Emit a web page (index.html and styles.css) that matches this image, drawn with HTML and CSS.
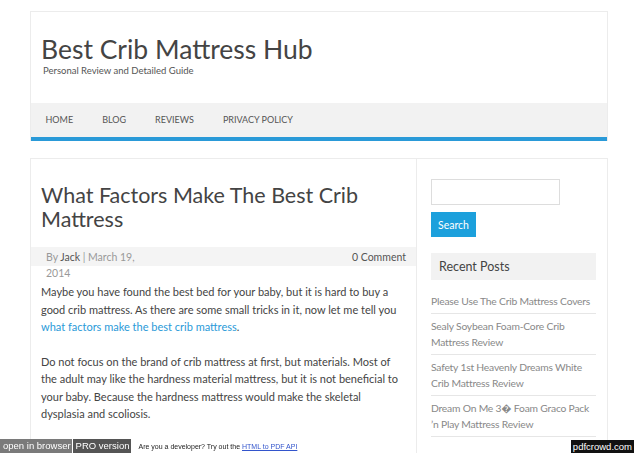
FILE: index.html
```html
<!DOCTYPE html>
<html lang="en">
<head>
    <meta charset="UTF-8">
    <meta name="viewport" content="width=device-width, initial-scale=1.0">
    <title>What Factors Make The Best Crib Mattress | Best Crib Mattress Hub</title>
    <link rel="stylesheet" href="styles.css">
</head>
<body>

    <div class="page">
        <header class="site-header">
            <div class="branding">
                <h1 class="site-title">Best Crib Mattress Hub</h1>
                <p class="site-desc">Personal Review and Detailed Guide</p>
            </div>
            <nav class="main-nav">
                <ul>
                    <li><a href="#">Home</a></li>
                    <li><a href="#">Blog</a></li>
                    <li><a href="#">Reviews</a></li>
                    <li><a href="#">Privacy Policy</a></li>
                </ul>
            </nav>
        </header>

        <div class="main">
            <article class="content">
                <h2 class="post-title">What Factors Make The Best Crib Mattress</h2>
                <div class="post-meta">
                    <div class="meta-left">
                        <span class="meta-line">By <a href="#">Jack</a> | March 19,</span>
                        <span class="meta-line">2014</span>
                    </div>
                    <a class="meta-comments" href="#">0 Comment</a>
                </div>
                <div class="post-body">
                    <p>Maybe you have found the best bed for your baby, but it is hard to buy a good crib mattress. As there are some small tricks in it, now let me tell you <a href="#">what factors make the best crib mattress</a>.</p>
                    <p>Do not focus on the brand of crib mattress at first, but materials. Most of the adult may like the hardness material mattress, but it is not beneficial to your baby. Because the hardness mattress would make the skeletal dysplasia and scoliosis.</p>
                </div>
            </article>

            <aside class="sidebar">
                <form class="search-form">
                    <input type="text" class="search-input">
                    <button type="submit" class="search-btn">Search</button>
                </form>
                <h3 class="widget-title">Recent Posts</h3>
                <ul class="recent-list">
                    <li><a href="#">Please Use The Crib Mattress Covers</a></li>
                    <li><a href="#">Sealy Soybean Foam-Core Crib Mattress Review</a></li>
                    <li><a href="#">Safety 1st Heavenly Dreams White Crib Mattress Review</a></li>
                    <li><a href="#">Dream On Me 3&#xFFFD; Foam Graco Pack &#8217;n Play Mattress Review</a></li>
                </ul>
            </aside>
        </div>
    </div>

    <div class="pdf-bar">
        <span class="pdf-open">open in browser</span><span class="pdf-pro">PRO version</span>
        <span class="pdf-note">Are you a developer? Try out the <a href="#">HTML to PDF API</a></span>
    </div>
    <div class="pdf-logo">pdfcrowd.com</div>

</body>
</html>
```

FILE: styles.css
```css
body {
    font-family: Lato, "Open Sans", sans-serif;
    background-color: #fff;
    color: #444;
    margin: 0;
    padding: 0;
}

a {
    text-decoration: none;
}

.page {
    width: 578px;
    margin-left: 30px;
    padding-top: 11px;
}

.site-header {
    border: 1px solid #ececec;
    border-bottom: none;
}

.branding {
    padding: 22px 0 26px 10px;
}

.site-title {
    font-size: 26.5px;
    font-weight: 400;
    line-height: 30px;
    color: #444;
    margin: 0;
}

.site-desc {
    font-size: 9.5px;
    line-height: 12px;
    color: #555;
    margin: 1px 0 0 2px;
}

.main-nav {
    background-color: #f2f2f2;
    border-bottom: 4px solid #2a9ad8;
}

.main-nav ul {
    list-style-type: none;
    margin: 0;
    padding: 0;
    display: flex;
}

.main-nav a {
    display: block;
    padding: 0 14.5px;
    line-height: 34px;
    font-size: 9px;
    text-transform: uppercase;
    color: #555;
}

.main {
    display: flex;
    margin-top: 17px;
    border: 1px solid #ececec;
    border-bottom: none;
    min-height: 300px;
}

.content {
    width: 385px;
    padding-top: 24px;
}

.post-title {
    font-size: 21.5px;
    font-weight: 400;
    line-height: 24px;
    color: #444;
    margin: 0 10px 16px;
}

.post-meta {
    background-color: #f4f4f4;
    height: 19px;
    margin-bottom: 17px;
    padding: 2px 10px 0 15px;
    box-sizing: border-box;
    display: flex;
    justify-content: space-between;
    font-size: 10.5px;
    line-height: 16px;
    color: #999;
}

.meta-left {
    display: flex;
    flex-direction: column;
}

.meta-left a {
    color: #555;
}

.meta-comments {
    color: #555;
}

.post-body {
    padding: 0 10px;
    font-size: 11px;
    line-height: 17.5px;
    color: #444;
}

.post-body p {
    margin: 0 0 17px;
}

.post-body a {
    color: #2a9ad8;
}

.sidebar {
    flex: 1;
    border-left: 1px solid #ececec;
    padding: 20px 11px 0 14px;
}

.search-form {
    display: flex;
    flex-direction: column;
    align-items: flex-start;
    gap: 7px;
}

.search-input {
    width: 129px;
    height: 26px;
    box-sizing: border-box;
    border: 1px solid #ddd;
    margin: 0;
}

.search-btn {
    background-color: #1ca0dc;
    color: #fff;
    border: none;
    height: 25px;
    padding: 0 7px;
    font-family: inherit;
    font-size: 10.5px;
}

.widget-title {
    background-color: #f2f2f2;
    font-size: 12.5px;
    font-weight: 400;
    line-height: 27px;
    padding-left: 8px;
    color: #444;
    margin: 16px 0 0;
}

.recent-list {
    list-style-type: none;
    padding: 0;
    margin: 9px 0 0;
}

.recent-list li {
    border-bottom: 1px solid #e6e6e6;
    padding: 4px 0;
    font-size: 10.3px;
    line-height: 16px;
    letter-spacing: -0.2px;
}

.recent-list a {
    color: #888;
}

.pdf-bar {
    position: fixed;
    left: 0;
    bottom: 0;
    height: 14px;
    display: flex;
    align-items: center;
    font-family: "Liberation Sans", Arial, sans-serif;
    background-color: #fff;
}

.pdf-open,
.pdf-pro {
    color: #fff;
    font-size: 9.5px;
    line-height: 14px;
}

.pdf-open {
    background-color: #7a7a7a;
    padding: 0 1px 0 3px;
    margin-right: 1px;
}

.pdf-pro {
    background-color: #555;
    padding: 0 2px 0 3px;
}

.pdf-note {
    font-size: 7px;
    color: #222;
    padding-left: 7px;
}

.pdf-note a {
    color: #3355cc;
    text-decoration: underline;
}

.pdf-logo {
    position: fixed;
    right: 4px;
    bottom: 0;
    background-color: #111;
    color: #fff;
    font-family: "Liberation Sans", Arial, sans-serif;
    font-size: 9.5px;
    line-height: 13px;
    padding: 0 2px;
}
```
